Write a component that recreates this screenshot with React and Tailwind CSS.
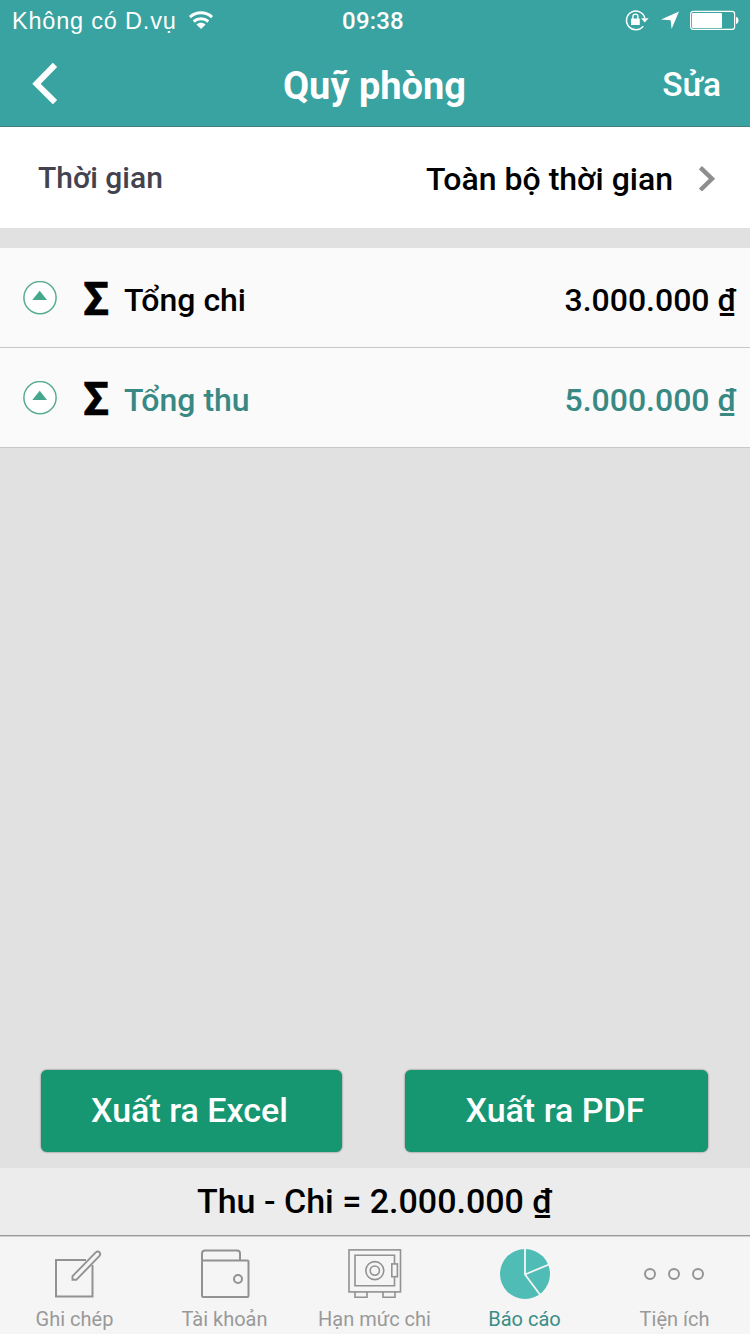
import React from "react";

function WifiIcon() {
  return (
    <svg className="h-5 w-6" viewBox="0 0 24 20" fill="none" stroke="white" strokeWidth="3">
      <path d="M0.9 6.1C7.2 0.3 16.8 0.3 23.1 6.1" />
      <path d="M4.7 10.5C8.9 6.8 15.1 6.8 19.3 10.5" />
      <path d="M12 18.1L7.4 13.4C10.1 11.2 13.9 11.2 16.6 13.4Z" fill="white" stroke="none" />
    </svg>
  );
}

function RotationLockIcon() {
  return (
    <svg className="h-[22px] w-[24px]" viewBox="0 0 24 22" fill="none">
      <path d="M18.2 17.1A9.3 9.3 0 1 1 19.8 9" stroke="white" strokeWidth="1.5" />
      <path d="M16 9.2H23.6L19.8 13.6Z" fill="white" />
      <rect x="6" y="9.6" width="8.8" height="6.4" rx="0.6" fill="white" />
      <path d="M7.9 10V7.6A2.5 2.5 0 0 1 12.9 7.6V10" stroke="white" strokeWidth="1.4" />
    </svg>
  );
}

function LocationIcon() {
  return (
    <svg className="h-[18px] w-[18px]" viewBox="0 0 18 18" fill="white">
      <path d="M18 0.5L10.6 18L9.6 9.2L0 8.6Z" />
    </svg>
  );
}

function BatteryIcon() {
  return (
    <svg className="h-[20px] w-[50px]" viewBox="0 0 50 20" fill="none">
      <rect x="0.6" y="1.4" width="44" height="18" rx="2.6" stroke="white" strokeWidth="1.2" />
      <rect x="2" y="2.9" width="30" height="15" rx="1" fill="white" />
      <path d="M46 6.8C49.4 7.8 49.4 13.1 46 14.1Z" fill="white" />
    </svg>
  );
}

function ExpandIcon() {
  return (
    <svg className="h-[34px] w-[34px]" viewBox="0 0 34 34" fill="none">
      <circle cx="17" cy="16.7" r="16.1" fill="#fff" stroke="#56ab92" strokeWidth="1.5" />
      <path d="M9.3 19H24L16.7 9.8Z" fill="#45a78c" />
    </svg>
  );
}

function NoteIcon() {
  return (
    <svg className="h-[50px] w-[54px]" viewBox="-4 1 54 50" fill="none" stroke="#929292" strokeWidth="2">
      <path d="M34 12H4V48.5H40.5V17" />
      <path d="M20.5 28.2L43.5 4.6C46.5 2 49.7 5.2 47.3 8.2L24.3 31.8H20.5Z" strokeWidth="1.9" />
    </svg>
  );
}

function WalletIcon() {
  return (
    <svg className="h-[50px] w-[50px]" viewBox="0 1 50 50" fill="none" stroke="#929292" strokeWidth="2">
      <path d="M2 12.5V5.5Q2 2.5 5 2.5H37Q40 2.5 40 5.5V12.5" />
      <rect x="2" y="12.5" width="46.5" height="36.5" rx="1" />
      <circle cx="38" cy="31" r="4" />
    </svg>
  );
}

function SafeIcon() {
  return (
    <svg className="h-[50px] w-[54px]" viewBox="0 0.7 54 50" fill="none" stroke="#929292" strokeWidth="1.6">
      <rect x="1" y="1.6" width="51.5" height="42" />
      <path d="M46.5 15V7H7V37.5H46.5V29" />
      <rect x="43.8" y="15.6" width="5.6" height="12.8" />
      <circle cx="26.8" cy="22.3" r="9" />
      <circle cx="26.8" cy="22.3" r="4.6" />
      <path d="M7 43.3V49H19V43.3M35 43.3V49H47V43.3" />
    </svg>
  );
}

function PieIcon() {
  return (
    <svg className="h-[50px] w-[50px]" viewBox="0 0 50 50" fill="none">
      <circle cx="25" cy="25" r="25" fill="#4fbcb5" />
      <path d="M25 -1V25.5L41 47M25 25.5L50 15" stroke="#f5f5f5" strokeWidth="1.8" />
    </svg>
  );
}

function MoreIcon() {
  return (
    <svg className="h-[50px] w-[62px]" viewBox="1 0 62 50" fill="none" stroke="#929292" strokeWidth="1.9">
      <circle cx="7" cy="25" r="5" />
      <circle cx="31" cy="25" r="5" />
      <circle cx="55" cy="25" r="5" />
    </svg>
  );
}

function SummaryRow({ label, amount, tone }) {
  return (
    <div className="flex h-[100px] items-center border-b border-[#c8c8c8] bg-[#fafafa] pr-[14px] pl-[23px]">
      <ExpandIcon />
      <span className="ml-[26px] w-[41px] pt-[3px] text-[46px] leading-[50px] font-bold [-webkit-text-stroke:0.6px_black]">Σ</span>
      <span className={"pt-[5px] text-[32px] leading-[40px] font-medium " + tone}>{label}</span>
      <span className={"ml-auto pt-[5px] text-[32px] leading-[40px] font-medium " + tone}>{amount}</span>
    </div>
  );
}

function Tab({ icon, label, active }) {
  return (
    <div className="flex w-[150px] shrink-0 flex-col items-center pt-3">
      {icon}
      <span className={"mt-[6px] pr-[1px] text-[20px] leading-[28px] whitespace-nowrap " + (active ? "text-[#388e87]" : "text-[#999999]")}>
        {label}
      </span>
    </div>
  );
}

export default function App() {
  return (
    <div className="flex h-[1334px] w-[750px] flex-col overflow-hidden bg-[#e1e1e1] font-['Roboto','Noto_Sans',sans-serif] text-black">
      <header className="flex h-[127px] flex-col border-b border-[#477f7b] bg-[#38a3a0] text-white">
        <div className="grid h-10 grid-cols-3 items-center pl-3">
          <div className="flex items-center gap-3 pt-[2px] font-['Liberation_Sans',sans-serif] text-[23.5px] whitespace-nowrap">
            <span className="pt-[1px] tracking-[0.8px]">Không có D.vụ</span>
            <WifiIcon />
          </div>
          <span className="pt-[2px] pr-[16px] text-center text-[24px] font-medium tracking-[0.2px]">09:38</span>
          <div className="flex items-center justify-end pr-[10px]">
            <RotationLockIcon />
            <span className="ml-[12px]"><LocationIcon /></span>
            <span className="ml-[11px]"><BatteryIcon /></span>
          </div>
        </div>
        <div className="grid h-[86px] grid-cols-[150px_1fr_150px] items-center">
          <svg className="ml-8 h-[42px] w-[28px]" viewBox="0 0 28 42" fill="none" stroke="white" strokeWidth="6">
            <path d="M23 2.8L4.5 21.8L23 40.2" />
          </svg>
          <h1 className="pt-[5px] pr-[1px] text-center text-[38px] leading-[46px] font-bold">Quỹ phòng</h1>
          <span className="pt-[4px] pr-[29px] text-right text-[33.5px] leading-[42px] font-medium">Sửa</span>
        </div>
      </header>
      <div className="flex h-[101px] items-center bg-white pr-[34px] pl-[38px]">
        <span className="text-[30px] leading-[36px] font-medium text-[#43434f]">Thời gian</span>
        <span className="mr-[25px] ml-auto pt-[3px] text-[32px] leading-[38px] font-medium">Toàn bộ thời gian</span>
        <svg className="h-[26px] w-[18px]" viewBox="0 0 18 26" fill="none" stroke="#8e8e8e" strokeWidth="4.4">
          <path d="M2.4 2.6L14 13.8L2.4 25" />
        </svg>
      </div>
      <main className="flex flex-1 flex-col pt-5">
        <SummaryRow label="Tổng chi" amount="3.000.000 ₫" tone="text-black" />
        <SummaryRow label="Tổng thu" amount="5.000.000 ₫" tone="text-[#388983]" />
        <div className="mt-auto mb-4 flex justify-between pr-[42px] pl-[41px]">
          <button className="h-[82px] w-[301px] rounded-[6px] bg-[#169671] pr-[4px] pb-[2px] text-[34px] font-medium text-white shadow-[0_0_2px_rgba(0,0,0,0.6)]">Xuất ra Excel</button>
          <button className="h-[82px] w-[303px] rounded-[6px] bg-[#169671] pr-[3px] pb-[2px] text-[34px] font-medium text-white shadow-[0_0_2px_rgba(0,0,0,0.6)]">Xuất ra PDF</button>
        </div>
      </main>
      <div className="flex h-[67px] items-center justify-center bg-[#ececec] pr-[1px] text-[34px] font-medium">Thu - Chi = 2.000.000 ₫</div>
      <nav className="flex h-[99px] border-t border-[#999999] bg-[#f5f5f5] pt-px shadow-[inset_0_1px_0_#cfcfcf]">
        <Tab icon={<NoteIcon />} label="Ghi chép" />
        <Tab icon={<WalletIcon />} label="Tài khoản" />
        <Tab icon={<SafeIcon />} label="Hạn mức chi" />
        <Tab icon={<PieIcon />} label="Báo cáo" active />
        <Tab icon={<MoreIcon />} label="Tiện ích" />
      </nav>
    </div>
  );
}
